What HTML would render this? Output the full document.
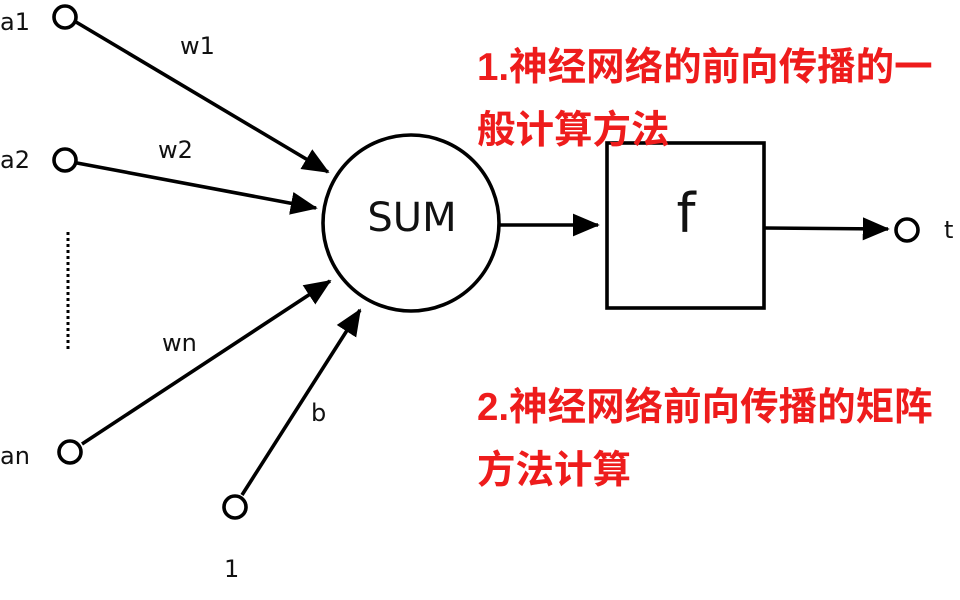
<!DOCTYPE html>
<html><head><meta charset="utf-8"><style>
html,body{margin:0;padding:0;background:#fff;width:960px;height:600px;overflow:hidden}
svg{display:block}
.l{font-family:"DejaVu Sans","Liberation Sans",sans-serif;fill:#111}
.r{font-family:"Liberation Sans","Noto Sans CJK SC",sans-serif;font-weight:bold;fill:#ee1c1c;font-size:38.5px}
</style></head><body>
<svg width="960" height="600" viewBox="0 0 960 600">
<defs><marker id="a" markerWidth="8" markerHeight="8" refX="7" refY="4" orient="auto" markerUnits="strokeWidth"><path d="M0,0.8 L7.5,4 L0,7.2 z" fill="#000"/></marker></defs>
<g stroke="#000" stroke-width="3.6" fill="none">
<line x1="76" y1="22" x2="328" y2="172" marker-end="url(#a)"/>
<line x1="77" y1="163" x2="316" y2="208" marker-end="url(#a)"/>
<line x1="82" y1="444" x2="330" y2="281" marker-end="url(#a)"/>
<line x1="242" y1="495" x2="360" y2="310" marker-end="url(#a)"/>
<line x1="500" y1="225" x2="598" y2="225" marker-end="url(#a)"/>
<line x1="764" y1="228" x2="888" y2="229" marker-end="url(#a)"/>
<circle cx="65" cy="17" r="11" fill="#fff"/>
<circle cx="65" cy="160" r="11" fill="#fff"/>
<circle cx="70" cy="452" r="11" fill="#fff"/>
<circle cx="235" cy="507" r="11" fill="#fff"/>
<circle cx="907" cy="230" r="11" fill="#fff"/>
<circle cx="411" cy="223" r="88" fill="#fff"/>
<rect x="607" y="143" width="157" height="165" fill="#fff"/>
<line x1="68" y1="232" x2="68" y2="352" stroke-width="3" stroke-dasharray="3,3"/>
</g>
<g class="l" font-size="24">
<text x="0" y="30">a1</text>
<text x="0" y="168">a2</text>
<text x="0" y="464">an</text>
<text x="180" y="54">w1</text>
<text x="158" y="158">w2</text>
<text x="162" y="351">wn</text>
<text x="311" y="421">b</text>
<text x="224" y="577">1</text>
<text x="944" y="238">t</text>
<text x="412" y="231" font-size="40" text-anchor="middle">SUM</text>
<text x="686" y="232" font-size="54" text-anchor="middle">f</text>
</g>
<text class="r" x="477" y="80">1.神经网络的前向传播的一</text>
<text class="r" x="477" y="143">般计算方法</text>
<text class="r" x="477" y="420">2.神经网络前向传播的矩阵</text>
<text class="r" x="477" y="483">方法计算</text>
</svg>
</body></html>
